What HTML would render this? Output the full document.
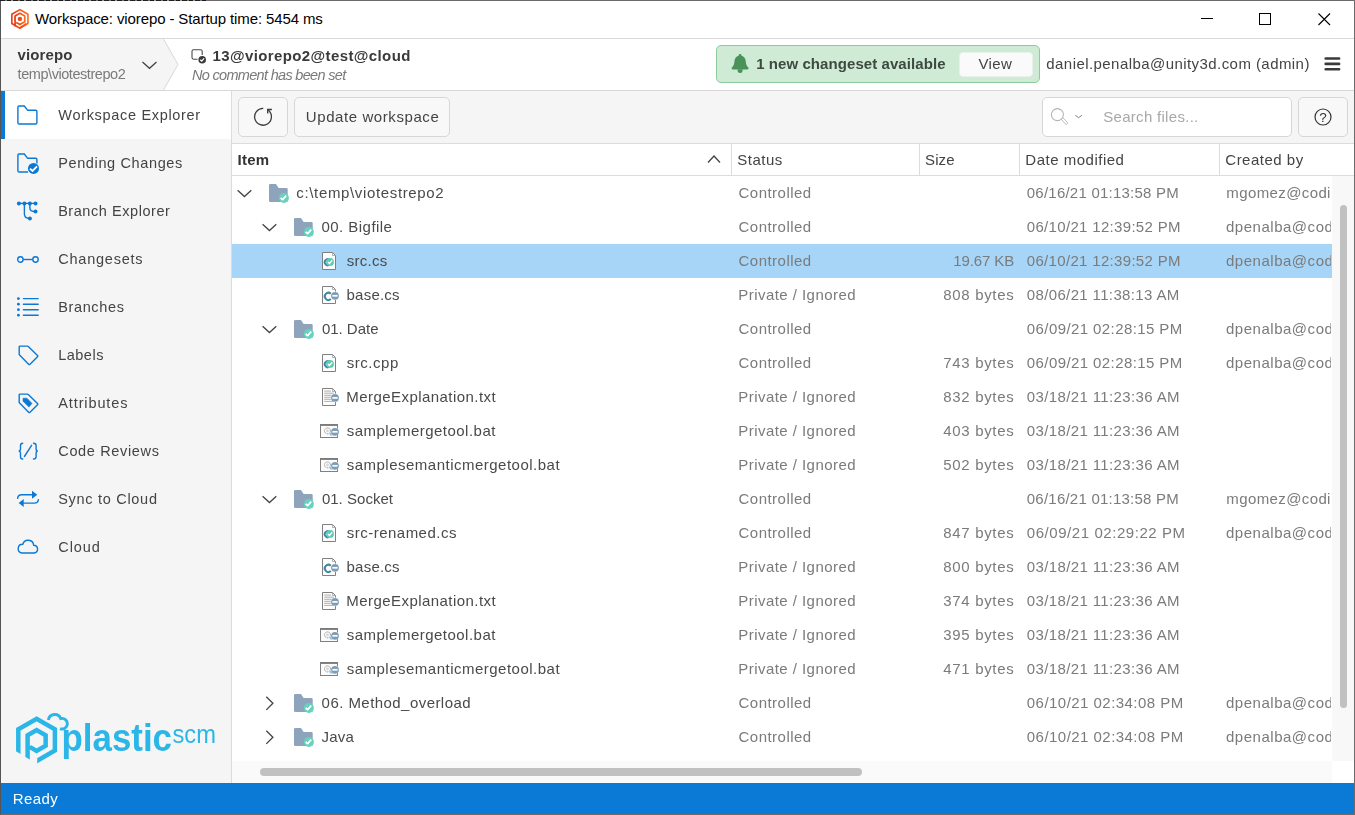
<!DOCTYPE html>
<html lang="en"><head><meta charset="utf-8"><title>Workspace: viorepo</title>
<style>
html,body{margin:0;padding:0;}
body{width:1355px;height:815px;overflow:hidden;background:#fff;font-family:"Liberation Sans",sans-serif;position:relative;}
.a{position:absolute;}
.t{position:absolute;white-space:nowrap;line-height:20px;height:20px;}
.btn{position:absolute;box-sizing:border-box;border:1px solid #d6d6d6;border-radius:5px;background:#f8f8f8;}
svg{position:absolute;overflow:visible;}
</style></head><body>
<div class="a" style="left:0px;top:0px;width:1355px;height:815px;background:#fff;"></div>
<div class="a" style="left:1px;top:38px;width:1353px;height:1px;background:#d9d9d9;"></div>
<svg style="left:1px;top:39px" width="200" height="51" viewBox="0 0 200 51"><path d="M0 0H162.5L177 25.5L162.5 51H0Z" fill="#f5f5f5"/><path d="M162.5 0L177 25.5L162.5 51" fill="none" stroke="#d8d8d8" stroke-width="1"/></svg>
<div class="a" style="left:1px;top:90px;width:1353px;height:1px;background:#d9d9d9;"></div>
<div class="a" style="left:1px;top:91px;width:230px;height:692px;background:#f5f5f5;"></div>
<div class="a" style="left:231px;top:91px;width:1px;height:692px;background:#dcdcdc;"></div>
<div class="a" style="left:1px;top:91px;width:230px;height:48px;background:#fff;"></div>
<div class="a" style="left:1px;top:91px;width:4px;height:48px;background:#0b78d4;"></div>
<div class="a" style="left:232px;top:91px;width:1122px;height:52px;background:#f5f5f5;"></div>
<div class="a" style="left:232px;top:143px;width:1122px;height:1px;background:#dcdcdc;"></div>
<div class="a" style="left:232px;top:175px;width:1122px;height:1px;background:#dcdcdc;"></div>
<div class="a" style="left:731px;top:144px;width:1px;height:31px;background:#dcdcdc;"></div>
<div class="a" style="left:919px;top:144px;width:1px;height:31px;background:#dcdcdc;"></div>
<div class="a" style="left:1019px;top:144px;width:1px;height:31px;background:#dcdcdc;"></div>
<div class="a" style="left:1219px;top:144px;width:1px;height:31px;background:#dcdcdc;"></div>
<div class="a" style="left:232px;top:244px;width:1100px;height:34px;background:#a6d5f7;"></div>
<div class="a" style="left:1332px;top:176px;width:22px;height:585px;background:#f8f8f8;"></div>
<div class="a" style="left:1339.5px;top:204.5px;width:7.5px;height:503.5px;background:#c1c1c1;border-radius:4px;"></div>
<div class="a" style="left:232px;top:761px;width:1100px;height:22px;background:#fafafa;"></div>
<div class="a" style="left:260px;top:768px;width:602px;height:7.5px;background:#c1c1c1;border-radius:4px;"></div>
<div class="a" style="left:1px;top:783px;width:1353px;height:31px;background:#0b7ad6;"></div>
<div class="a" style="left:0;top:0;width:206px;height:1px;background:repeating-linear-gradient(90deg,#222 0 5px,#777 5px 7px,#1a1a1a 7px 11px,#999 11px 13px);z-index:5;"></div>
<svg style="left:0px;top:0px" width="40" height="38" viewBox="0 0 40 38"><defs><linearGradient id="tg" x1="0" x2="1" y1="0" y2="0"><stop offset="0" stop-color="#e63a10"/><stop offset="1" stop-color="#ff6a1c"/></linearGradient></defs><path d="M19.90 9.60 L27.95 14.25 L27.95 23.55 L19.90 28.20 L11.85 23.55 L11.85 14.25Z" fill="none" stroke="url(#tg)" stroke-width="1.600" stroke-linejoin="round"/><path d="M15.05 26.50L15.05 16.10L19.90 13.30L24.75 16.10L24.75 21.70L19.90 24.50L16.25 22.40" fill="none" stroke="url(#tg)" stroke-width="1.700"/><path d="M19.90 27.70L26.35 23.35" stroke="url(#tg)" stroke-width="1.300"/><circle cx="19.9" cy="18.9" r="2.200" fill="#ee4a12"/></svg>
<span class="t" style="left:35.10px;top:9px;font-size:15px;color:#000;letter-spacing:-0.112px;">Workspace: viorepo - Startup time: 5454 ms</span>
<svg style="left:1190px;top:0px" width="165" height="38" viewBox="0 0 165 38"><path d="M11 18.500H23" stroke="#000" stroke-width="1"/><rect x="69.500" y="13.500" width="11" height="11" fill="none" stroke="#000" stroke-width="1"/><path d="M128.500 13.500L140 25M140 13.500L128.500 25" stroke="#000" stroke-width="1.1" fill="none"/></svg>
<div class="a" style="left:0;top:0;width:1355px;height:815px;will-change:transform;">
<span class="t" style="left:17.60px;top:45px;font-size:15px;color:#3a3a3a;font-weight:700;letter-spacing:0.117px;">viorepo</span>
<span class="t" style="left:17.60px;top:64px;font-size:14.5px;color:#7a7a7a;letter-spacing:-0.444px;">temp\viotestrepo2</span>
<svg style="left:141px;top:59.500px" width="18" height="12" viewBox="0 0 18 12"><path d="M1.500 2L8.500 8.300L15.500 2" fill="none" stroke="#444" stroke-width="1.300"/></svg>
<svg style="left:190px;top:47.800px" width="18" height="18" viewBox="0 0 18 18"><path d="M12.200 7V3.300Q12.200 1.700 10.600 1.700H3.600Q2 1.700 2 3.300V9.600Q2 11.200 3.600 11.200H7.500" fill="none" stroke="#4a4a4a" stroke-width="1.100"/><circle cx="12.200" cy="11.700" r="3.800" fill="#3a3a3a"/><path d="M10.300 11.800L11.700 13.100L14.100 10.400" fill="none" stroke="#fff" stroke-width="1.200"/></svg>
<span class="t" style="left:212.45px;top:45.8px;font-size:15px;color:#3a3a3a;font-weight:700;letter-spacing:0.388px;">13@viorepo2@test@cloud</span>
<span class="t" style="left:192.00px;top:64.9px;font-size:14.5px;color:#7a7a7a;font-style:italic;letter-spacing:-0.686px;">No comment has been set</span>
<div class="a" style="left:716px;top:45px;width:324px;height:38px;box-sizing:border-box;background:#cfebd6;border:1px solid #8ccb9b;border-radius:5px;"></div>
<svg style="left:730.500px;top:53px" width="19" height="22" viewBox="0 0 19 22"><path d="M9.100 1C10 1 10.400 1.600 10.400 2.400C13.200 3.200 14.600 5.600 14.800 8.500C15 11.500 15.600 12.800 17.300 14.600C17.900 15.300 17.500 16.400 16.600 16.400H1.600C0.700 16.400 0.300 15.300 0.900 14.600C2.600 12.800 3.200 11.500 3.400 8.500C3.600 5.600 5 3.200 7.800 2.400C7.800 1.600 8.200 1 9.100 1Z" fill="#4a9259"/><path d="M6.600 16.200H11.600V17.400A2.500 2.500 0 0 1 6.600 17.400Z" fill="#4a9259"/></svg>
<span class="t" style="left:756.15px;top:54px;font-size:15px;color:#3d4a40;font-weight:700;letter-spacing:0.073px;">1 new changeset available</span>
<div class="a" style="left:958.500px;top:51.500px;width:74px;height:25px;box-sizing:border-box;background:#fafafa;border:1px solid #eaf1ec;border-radius:4px;"></div>
<span class="t" style="left:978.50px;top:54px;font-size:15px;color:#444;letter-spacing:0.367px;">View</span>
<span class="t" style="left:1046.30px;top:54px;font-size:15px;color:#444;letter-spacing:0.436px;">daniel.penalba@unity3d.com (admin)</span>
<svg style="left:1322px;top:55px" width="20" height="18" viewBox="0 0 20 18"><path d="M3.700 3.500H17.100M3.700 8.900H17.100M3.700 14.300H17.100" stroke="#3a3a3a" stroke-width="2.600" stroke-linecap="round"/></svg>
<svg style="left:16px;top:103px" width="24" height="24" viewBox="0 0 24 24"><path d="M1.900 4.200Q1.900 3 3.100 3H8.300L11.500 7.200H19.700Q20.900 7.200 20.900 8.400V19.800Q20.900 21 19.700 21H3.100Q1.900 21 1.900 19.800Z" fill="none" stroke="#0b78d4" stroke-width="1.400" stroke-linejoin="round"/></svg>
<span class="t" style="left:58.30px;top:105px;font-size:14.5px;color:#444;letter-spacing:0.682px;">Workspace Explorer</span>
<svg style="left:16px;top:151px" width="24" height="24" viewBox="0 0 24 24"><path d="M12 21H3.100Q1.900 21 1.900 19.800V4.200Q1.900 3 3.100 3H8.300L11.500 7.200H19.700Q20.900 7.200 20.900 8.400V12.500" fill="none" stroke="#0b78d4" stroke-width="1.400" stroke-linejoin="round"/><circle cx="17.500" cy="17.400" r="5.500" fill="#0b78d4"/><path d="M14 17.600L16.500 20L21 15.300" fill="none" stroke="#fff" stroke-width="1.900"/></svg>
<span class="t" style="left:58.15px;top:153px;font-size:14.5px;color:#444;letter-spacing:0.632px;">Pending Changes</span>
<svg style="left:16px;top:199px" width="24" height="24" viewBox="0 0 24 24"><path d="M2.900 4.400H19.500M8.400 4.400V15Q8.400 19.500 13.900 19.500M13.900 4.400V9Q13.900 12.600 19.500 12.600" fill="none" stroke="#0b78d4" stroke-width="1.400"/><circle cx="2.900" cy="4.400" r="2" fill="#0b78d4"/><circle cx="8.400" cy="4.400" r="2" fill="#0b78d4"/><circle cx="13.900" cy="4.400" r="2" fill="#0b78d4"/><circle cx="19.500" cy="4.400" r="2" fill="#0b78d4"/><circle cx="19.500" cy="12.600" r="2" fill="#0b78d4"/><circle cx="13.900" cy="19.500" r="2" fill="#0b78d4"/></svg>
<span class="t" style="left:58.15px;top:201px;font-size:14.5px;color:#444;letter-spacing:0.554px;">Branch Explorer</span>
<svg style="left:16px;top:247px" width="24" height="24" viewBox="0 0 24 24"><path d="M7.100 12.500H16.800" stroke="#0b78d4" stroke-width="1.400"/><circle cx="4.400" cy="12.500" r="2.700" fill="none" stroke="#0b78d4" stroke-width="1.400"/><circle cx="19.500" cy="12.500" r="2.700" fill="none" stroke="#0b78d4" stroke-width="1.400"/></svg>
<span class="t" style="left:58.30px;top:249px;font-size:14.5px;color:#444;letter-spacing:0.767px;">Changesets</span>
<svg style="left:16px;top:295px" width="24" height="24" viewBox="0 0 24 24"><path d="M7.400 3.600H22.200M7.400 9.200H22.200M7.400 14.700H22.200M7.400 20.200H22.200" stroke="#0b78d4" stroke-width="1.400" stroke-linecap="round"/><circle cx="2.400" cy="3.600" r="1.400" fill="#0b78d4"/><circle cx="2.400" cy="9.200" r="1.400" fill="#0b78d4"/><circle cx="2.400" cy="14.700" r="1.400" fill="#0b78d4"/><circle cx="2.400" cy="20.200" r="1.400" fill="#0b78d4"/></svg>
<span class="t" style="left:58.15px;top:297px;font-size:14.5px;color:#444;letter-spacing:0.650px;">Branches</span>
<svg style="left:16px;top:343px" width="24" height="24" viewBox="0 0 24 24"><path d="M4.200 3.100H11.400Q11.900 3.100 12.300 3.500L21.500 12.400Q22.200 13.100 21.500 13.800L14 21.300Q13.300 22 12.600 21.300L3.600 12.100Q3.200 11.700 3.200 11.200V4.100Q3.200 3.100 4.200 3.100Z" fill="none" stroke="#0b78d4" stroke-width="1.400" stroke-linejoin="round"/></svg>
<span class="t" style="left:58.15px;top:345px;font-size:14.5px;color:#444;letter-spacing:0.510px;">Labels</span>
<svg style="left:16px;top:391px" width="24" height="24" viewBox="0 0 24 24"><path d="M4.200 3.100H11.400Q11.900 3.100 12.300 3.500L21.500 12.400Q22.200 13.100 21.500 13.800L14 21.300Q13.300 22 12.600 21.300L3.600 12.100Q3.200 11.700 3.200 11.200V4.100Q3.200 3.100 4.200 3.100Z" fill="none" stroke="#0b78d4" stroke-width="1.400" stroke-linejoin="round"/><path d="M7 7.200H10.900L16 12.400L12.900 16.100L7 10.200Z" fill="#0b78d4" stroke="#0b78d4" stroke-width="0.600" stroke-linejoin="round"/></svg>
<span class="t" style="left:58.30px;top:393px;font-size:14.5px;color:#444;letter-spacing:0.878px;">Attributes</span>
<svg style="left:16px;top:439px" width="24" height="24" viewBox="0 0 24 24"><path d="M6.700 4.300Q4.500 4.300 4.500 6.500V10Q4.500 12.100 2.600 12.100Q4.500 12.100 4.500 14.200V17.800Q4.500 20 6.700 20M17.500 4.300Q20.100 4.300 20.100 6.500V10Q20.100 12.100 21.900 12.100Q20.100 12.100 20.100 14.200V17.800Q20.100 20 17.500 20M15.600 6.300L8.400 17.500" fill="none" stroke="#0b78d4" stroke-width="1.400" stroke-linecap="round"/></svg>
<span class="t" style="left:58.30px;top:441px;font-size:14.5px;color:#444;letter-spacing:0.645px;">Code Reviews</span>
<svg style="left:16px;top:487px" width="24" height="24" viewBox="0 0 24 24"><path d="M1.600 11.400Q2 7.700 5.700 7.700H16.500M22.400 12.600Q22 16.100 18.500 16.100H7.500" fill="none" stroke="#0b78d4" stroke-width="1.400" stroke-linecap="round"/><path d="M16 3.800L21.300 7.700L16 11.700Z M7.700 12.100L2.700 16.100L7.700 20Z" fill="#0b78d4"/></svg>
<span class="t" style="left:58.15px;top:489px;font-size:14.5px;color:#444;letter-spacing:0.712px;">Sync to Cloud</span>
<svg style="left:16px;top:535px" width="24" height="24" viewBox="0 0 24 24"><path d="M5.700 18H18.500A3.950 3.950 0 0 0 17.600 10.200A5.500 5.500 0 0 0 6.800 9.300A4.400 4.400 0 0 0 5.700 18Z" fill="none" stroke="#0b78d4" stroke-width="1.400" stroke-linejoin="round"/></svg>
<span class="t" style="left:58.30px;top:537px;font-size:14.5px;color:#444;letter-spacing:0.900px;">Cloud</span>
<svg style="left:0px;top:700px" width="232" height="80" viewBox="0 0 232 80"><path d="M18.300 58V29.400L36.600 18.850L54.900 29.400V50.550L33 63.200" fill="none" stroke="#2bb6e8" stroke-width="4.500" stroke-linejoin="miter"/><path d="M27.600 63V35.200L36.600 30L45.650 35.200V45.650L36.600 50.900L29.700 46.900" fill="none" stroke="#2bb6e8" stroke-width="4.500" stroke-linejoin="miter"/><path d="M15 50.650L22 54.700V66H15Z M24 56.200L31.500 60.500V66H24Z M31.500 54H37.200V68H31.500Z" fill="#f5f5f5"/><path d="M48.400 20A6.400 6.400 0 0 1 60.700 18.600A5.300 5.300 0 1 1 60 28.600" fill="none" stroke="#2bb6e8" stroke-width="2.900"/><text x="61.500" y="50.700" font-family="Liberation Sans, sans-serif" font-weight="700" font-size="38" fill="#2bb6e8" textLength="110.500" lengthAdjust="spacingAndGlyphs">plastic</text><text x="172.500" y="43" font-family="Liberation Sans, sans-serif" font-size="25.500" fill="#2bb6e8" textLength="43.500" lengthAdjust="spacingAndGlyphs">scm</text></svg>
<span class="t" style="left:12.85px;top:789px;font-size:15px;color:#fff;letter-spacing:0.388px;">Ready</span>
<div class="btn" style="left:238px;top:97px;width:50px;height:40px;"></div>
<svg style="left:252px;top:105px" width="22" height="24" viewBox="0 0 22 24"><path d="M11.300 3.400A8.400 8.400 0 1 0 16.100 5.100" fill="none" stroke="#3c3c3c" stroke-width="1.300"/><path d="M19.900 4.500H15.700V8.600" fill="none" stroke="#3c3c3c" stroke-width="1.300"/></svg>
<div class="btn" style="left:294px;top:97px;width:156px;height:40px;"></div>
<span class="t" style="left:305.85px;top:107px;font-size:15px;color:#444;letter-spacing:0.577px;">Update workspace</span>
<div class="btn" style="left:1042px;top:97px;width:250px;height:40px;background:#fff;"></div>
<svg style="left:1040px;top:95px" width="50" height="40" viewBox="0 0 50 40"><circle cx="17.400" cy="19.600" r="6" fill="none" stroke="#b4b4b4" stroke-width="1.100"/><path d="M21.300 24.300L22.900 22.700L27.300 27.300Q28 28.600 26.900 29.200Q26 29.600 25.300 28.800Z" fill="#fff" stroke="#b4b4b4" stroke-width="0.900"/><path d="M35.300 20.300L38.600 22.700L41.900 20.300" fill="none" stroke="#707070" stroke-width="0.900"/></svg>
<span class="t" style="left:1103.25px;top:107px;font-size:15px;color:#a8a8a8;letter-spacing:0.296px;">Search files...</span>
<div class="btn" style="left:1298px;top:97px;width:50px;height:40px;"></div>
<svg style="left:1312px;top:106px" width="22" height="22" viewBox="0 0 22 22"><circle cx="11" cy="11" r="8" fill="none" stroke="#333" stroke-width="1.200"/><text x="11" y="15.500" text-anchor="middle" font-family="Liberation Sans, sans-serif" font-size="13.500" fill="#333">?</text></svg>
<span class="t" style="left:237.55px;top:150px;font-size:15px;color:#333;font-weight:700;letter-spacing:0.250px;">Item</span>
<svg style="left:706.200px;top:152.600px" width="16" height="12" viewBox="0 0 16 12"><path d="M2 9.500L8 3L14 9.500" fill="none" stroke="#444" stroke-width="1.300"/></svg>
<span class="t" style="left:737.35px;top:150px;font-size:15px;color:#444;letter-spacing:0.470px;">Status</span>
<span class="t" style="left:925.05px;top:150px;font-size:15px;color:#444;letter-spacing:0.083px;">Size</span>
<span class="t" style="left:1025.35px;top:150px;font-size:15px;color:#444;letter-spacing:0.504px;">Date modified</span>
<span class="t" style="left:1225.30px;top:150px;font-size:15px;color:#444;letter-spacing:0.500px;">Created by</span>
<div class="a" style="left:232px;top:176px;width:1100px;height:584px;overflow:hidden;">
<svg style="left:4px;top:7px" width="20" height="20" viewBox="0 0 20 20"><path d="M1.600 7.300L8.450 13.600L15.300 7.300" fill="none" stroke="#444" stroke-width="1.300"/></svg>
<svg style="left:36px;top:7px" width="24" height="22" viewBox="0 0 24 22"><path d="M1 2.200Q1 1 2.200 1H8L10.600 5H18.500Q19.700 5 19.700 6.200V17.700Q19.700 18.900 18.500 18.900H2.200Q1 18.900 1 17.700Z" fill="#8ea4bc"/><circle cx="15.900" cy="15" r="5" fill="#67d3bd"/><path d="M12.600 15L14.700 16.600L18.200 12.600" fill="none" stroke="#fff" stroke-width="1.700"/></svg>
<span class="t" style="left:64.30px;top:7px;font-size:15px;color:#4a4a4a;letter-spacing:0.647px;">c:\temp\viotestrepo2</span>
<span class="t" style="left:506.50px;top:7px;font-size:15px;color:#7b7b7b;letter-spacing:0.478px;">Controlled</span>
<span class="t" style="left:794.80px;top:7px;font-size:15px;color:#7b7b7b;letter-spacing:0.226px;">06/16/21 01:13:58 PM</span>
<div class="a" style="left:988px;top:7px;width:111px;height:20px;overflow:hidden;">
<span class="t" style="left:6.35px;top:0px;font-size:15px;color:#7b7b7b;letter-spacing:0.385px;">mgomez@codicesoftware.com</span>
</div>
<svg style="left:29px;top:41px" width="20" height="20" viewBox="0 0 20 20"><path d="M1.600 7.300L8.450 13.600L15.300 7.300" fill="none" stroke="#444" stroke-width="1.300"/></svg>
<svg style="left:61px;top:41px" width="24" height="22" viewBox="0 0 24 22"><path d="M1 2.200Q1 1 2.200 1H8L10.600 5H18.500Q19.700 5 19.700 6.200V17.700Q19.700 18.900 18.500 18.900H2.200Q1 18.900 1 17.700Z" fill="#8ea4bc"/><circle cx="15.900" cy="15" r="5" fill="#67d3bd"/><path d="M12.600 15L14.700 16.600L18.200 12.600" fill="none" stroke="#fff" stroke-width="1.700"/></svg>
<span class="t" style="left:89.40px;top:41px;font-size:15px;color:#4a4a4a;letter-spacing:0.470px;">00. Bigfile</span>
<span class="t" style="left:506.50px;top:41px;font-size:15px;color:#7b7b7b;letter-spacing:0.478px;">Controlled</span>
<span class="t" style="left:794.80px;top:41px;font-size:15px;color:#7b7b7b;letter-spacing:0.321px;">06/10/21 12:39:52 PM</span>
<div class="a" style="left:988px;top:41px;width:111px;height:20px;overflow:hidden;">
<span class="t" style="left:6.00px;top:0px;font-size:15px;color:#7b7b7b;letter-spacing:0.518px;">dpenalba@codicesoftware.com</span>
</div>
<svg style="left:88px;top:75px" width="22" height="20" viewBox="0 0 22 20"><path d="M2.500 1.500H12.500L15.500 4.500V18.500H2.500Z" fill="#fdfdfd" stroke="#808080" stroke-width="1"/><path d="M12.500 1.800V4.500H15.200" fill="none" stroke="#a8a8a8" stroke-width="0.900"/><path d="M9.500 8.600A3.100 3.100 0 1 0 9.500 13.800" fill="none" stroke="#3f86a6" stroke-width="1.900"/><circle cx="10" cy="10.900" r="3.900" fill="#5ccbb2"/><path d="M7.900 11L9.500 12.400L12.200 9.300" fill="none" stroke="#fff" stroke-width="1.400"/></svg>
<span class="t" style="left:114.70px;top:75px;font-size:15px;color:#4a4a4a;letter-spacing:0.280px;">src.cs</span>
<span class="t" style="left:506.50px;top:75px;font-size:15px;color:#7b7b7b;letter-spacing:0.478px;">Controlled</span>
<span class="t" style="left:721.15px;top:75px;font-size:15px;color:#7b7b7b;letter-spacing:-0.079px;">19.67 KB</span>
<span class="t" style="left:794.80px;top:75px;font-size:15px;color:#7b7b7b;letter-spacing:0.321px;">06/10/21 12:39:52 PM</span>
<div class="a" style="left:988px;top:75px;width:111px;height:20px;overflow:hidden;">
<span class="t" style="left:6.00px;top:0px;font-size:15px;color:#7b7b7b;letter-spacing:0.518px;">dpenalba@codicesoftware.com</span>
</div>
<svg style="left:88px;top:109px" width="22" height="20" viewBox="0 0 22 20"><path d="M2.500 1.500H12.500L15.500 4.500V18.500H2.500Z" fill="#fdfdfd" stroke="#808080" stroke-width="1"/><path d="M12.500 1.800V4.500H15.200" fill="none" stroke="#a8a8a8" stroke-width="0.900"/><path d="M10.800 8.700A3.600 3.600 0 1 0 10.800 14.100" fill="none" stroke="#3f86a6" stroke-width="2"/><circle cx="15" cy="10.8" r="4.300" fill="#fff"/><circle cx="15" cy="10.8" r="3.900" fill="#7f9db5"/><path d="M12.4 10.8H17.6" stroke="#fff" stroke-width="1.700"/></svg>
<span class="t" style="left:114.55px;top:109px;font-size:15px;color:#4a4a4a;letter-spacing:0.225px;">base.cs</span>
<span class="t" style="left:506.35px;top:109px;font-size:15px;color:#7b7b7b;letter-spacing:0.447px;">Private / Ignored</span>
<span class="t" style="left:711.30px;top:109px;font-size:15px;color:#7b7b7b;letter-spacing:0.663px;">808 bytes</span>
<span class="t" style="left:794.80px;top:109px;font-size:15px;color:#7b7b7b;letter-spacing:0.358px;">08/06/21 11:38:13 AM</span>
<svg style="left:29px;top:143px" width="20" height="20" viewBox="0 0 20 20"><path d="M1.600 7.300L8.450 13.600L15.300 7.300" fill="none" stroke="#444" stroke-width="1.300"/></svg>
<svg style="left:61px;top:143px" width="24" height="22" viewBox="0 0 24 22"><path d="M1 2.200Q1 1 2.200 1H8L10.600 5H18.500Q19.700 5 19.700 6.200V17.700Q19.700 18.900 18.500 18.900H2.200Q1 18.900 1 17.700Z" fill="#8ea4bc"/><circle cx="15.900" cy="15" r="5" fill="#67d3bd"/><path d="M12.600 15L14.700 16.600L18.200 12.600" fill="none" stroke="#fff" stroke-width="1.700"/></svg>
<span class="t" style="left:89.90px;top:143px;font-size:15px;color:#4a4a4a;letter-spacing:-0.014px;">01. Date</span>
<span class="t" style="left:506.50px;top:143px;font-size:15px;color:#7b7b7b;letter-spacing:0.478px;">Controlled</span>
<span class="t" style="left:794.80px;top:143px;font-size:15px;color:#7b7b7b;letter-spacing:0.411px;">06/09/21 02:28:15 PM</span>
<div class="a" style="left:988px;top:143px;width:111px;height:20px;overflow:hidden;">
<span class="t" style="left:6.00px;top:0px;font-size:15px;color:#7b7b7b;letter-spacing:0.518px;">dpenalba@codicesoftware.com</span>
</div>
<svg style="left:88px;top:177px" width="22" height="20" viewBox="0 0 22 20"><path d="M2.500 1.500H12.500L15.500 4.500V18.500H2.500Z" fill="#fdfdfd" stroke="#808080" stroke-width="1"/><path d="M12.500 1.800V4.500H15.200" fill="none" stroke="#a8a8a8" stroke-width="0.900"/><path d="M9.500 8.600A3.100 3.100 0 1 0 9.500 13.800" fill="none" stroke="#3f86a6" stroke-width="1.900"/><circle cx="10" cy="10.900" r="3.900" fill="#5ccbb2"/><path d="M7.900 11L9.500 12.400L12.200 9.300" fill="none" stroke="#fff" stroke-width="1.400"/></svg>
<span class="t" style="left:114.70px;top:177px;font-size:15px;color:#4a4a4a;letter-spacing:0.533px;">src.cpp</span>
<span class="t" style="left:506.50px;top:177px;font-size:15px;color:#7b7b7b;letter-spacing:0.478px;">Controlled</span>
<span class="t" style="left:711.30px;top:177px;font-size:15px;color:#7b7b7b;letter-spacing:0.663px;">743 bytes</span>
<span class="t" style="left:794.80px;top:177px;font-size:15px;color:#7b7b7b;letter-spacing:0.411px;">06/09/21 02:28:15 PM</span>
<div class="a" style="left:988px;top:177px;width:111px;height:20px;overflow:hidden;">
<span class="t" style="left:6.00px;top:0px;font-size:15px;color:#7b7b7b;letter-spacing:0.518px;">dpenalba@codicesoftware.com</span>
</div>
<svg style="left:88px;top:211px" width="22" height="20" viewBox="0 0 22 20"><path d="M2.500 1.500H12.500L15.500 4.500V18.500H2.500Z" fill="#fdfdfd" stroke="#808080" stroke-width="1"/><path d="M12.500 1.800V4.500H15.200" fill="none" stroke="#a8a8a8" stroke-width="0.900"/><path d="M4.200 4.100H11M4.200 6.200H14M4.200 8.300H14M4.200 10.300H14M4.200 12.300H14M4.200 14.400H14" stroke="#9a9a9a" stroke-width="0.800"/><circle cx="15" cy="10.9" r="4.300" fill="#fff"/><circle cx="15" cy="10.9" r="3.900" fill="#7f9db5"/><path d="M12.4 10.9H17.6" stroke="#fff" stroke-width="1.700"/></svg>
<span class="t" style="left:114.20px;top:211px;font-size:15px;color:#4a4a4a;letter-spacing:0.453px;">MergeExplanation.txt</span>
<span class="t" style="left:506.35px;top:211px;font-size:15px;color:#7b7b7b;letter-spacing:0.447px;">Private / Ignored</span>
<span class="t" style="left:711.30px;top:211px;font-size:15px;color:#7b7b7b;letter-spacing:0.663px;">832 bytes</span>
<span class="t" style="left:794.80px;top:211px;font-size:15px;color:#7b7b7b;letter-spacing:0.374px;">03/18/21 11:23:36 AM</span>
<svg style="left:88px;top:245px" width="22" height="20" viewBox="0 0 22 20"><rect x="0.500" y="3.500" width="17" height="13" fill="#fcfcfc" stroke="#808080" stroke-width="1"/><path d="M0.500 4.200H17.500" stroke="#777" stroke-width="1.400"/><circle cx="7.500" cy="9.900" r="3" fill="none" stroke="#8a8a8a" stroke-width="1" stroke-dasharray="1.300 0.800"/><circle cx="7.500" cy="9.900" r="0.900" fill="none" stroke="#aaa" stroke-width="0.600"/><circle cx="11.300" cy="13" r="1.800" fill="#8fc4ea"/><circle cx="15" cy="10.8" r="4.300" fill="#fff"/><circle cx="15" cy="10.8" r="3.900" fill="#7f9db5"/><path d="M12.4 10.8H17.6" stroke="#fff" stroke-width="1.700"/></svg>
<span class="t" style="left:114.70px;top:245px;font-size:15px;color:#4a4a4a;letter-spacing:0.478px;">samplemergetool.bat</span>
<span class="t" style="left:506.35px;top:245px;font-size:15px;color:#7b7b7b;letter-spacing:0.447px;">Private / Ignored</span>
<span class="t" style="left:711.30px;top:245px;font-size:15px;color:#7b7b7b;letter-spacing:0.663px;">403 bytes</span>
<span class="t" style="left:794.80px;top:245px;font-size:15px;color:#7b7b7b;letter-spacing:0.374px;">03/18/21 11:23:36 AM</span>
<svg style="left:88px;top:279px" width="22" height="20" viewBox="0 0 22 20"><rect x="0.500" y="3.500" width="17" height="13" fill="#fcfcfc" stroke="#808080" stroke-width="1"/><path d="M0.500 4.200H17.500" stroke="#777" stroke-width="1.400"/><circle cx="7.500" cy="9.900" r="3" fill="none" stroke="#8a8a8a" stroke-width="1" stroke-dasharray="1.300 0.800"/><circle cx="7.500" cy="9.900" r="0.900" fill="none" stroke="#aaa" stroke-width="0.600"/><circle cx="11.300" cy="13" r="1.800" fill="#8fc4ea"/><circle cx="15" cy="10.8" r="4.300" fill="#fff"/><circle cx="15" cy="10.8" r="3.900" fill="#7f9db5"/><path d="M12.4 10.8H17.6" stroke="#fff" stroke-width="1.700"/></svg>
<span class="t" style="left:114.70px;top:279px;font-size:15px;color:#4a4a4a;letter-spacing:0.492px;">samplesemanticmergetool.bat</span>
<span class="t" style="left:506.35px;top:279px;font-size:15px;color:#7b7b7b;letter-spacing:0.447px;">Private / Ignored</span>
<span class="t" style="left:711.30px;top:279px;font-size:15px;color:#7b7b7b;letter-spacing:0.663px;">502 bytes</span>
<span class="t" style="left:794.80px;top:279px;font-size:15px;color:#7b7b7b;letter-spacing:0.374px;">03/18/21 11:23:36 AM</span>
<svg style="left:29px;top:313px" width="20" height="20" viewBox="0 0 20 20"><path d="M1.600 7.300L8.450 13.600L15.300 7.300" fill="none" stroke="#444" stroke-width="1.300"/></svg>
<svg style="left:61px;top:313px" width="24" height="22" viewBox="0 0 24 22"><path d="M1 2.200Q1 1 2.200 1H8L10.600 5H18.500Q19.700 5 19.700 6.200V17.700Q19.700 18.900 18.500 18.900H2.200Q1 18.900 1 17.700Z" fill="#8ea4bc"/><circle cx="15.900" cy="15" r="5" fill="#67d3bd"/><path d="M12.600 15L14.700 16.600L18.200 12.600" fill="none" stroke="#fff" stroke-width="1.700"/></svg>
<span class="t" style="left:89.90px;top:313px;font-size:15px;color:#4a4a4a;letter-spacing:0.022px;">01. Socket</span>
<span class="t" style="left:506.50px;top:313px;font-size:15px;color:#7b7b7b;letter-spacing:0.478px;">Controlled</span>
<span class="t" style="left:794.80px;top:313px;font-size:15px;color:#7b7b7b;letter-spacing:0.226px;">06/16/21 01:13:58 PM</span>
<div class="a" style="left:988px;top:313px;width:111px;height:20px;overflow:hidden;">
<span class="t" style="left:6.35px;top:0px;font-size:15px;color:#7b7b7b;letter-spacing:0.385px;">mgomez@codicesoftware.com</span>
</div>
<svg style="left:88px;top:347px" width="22" height="20" viewBox="0 0 22 20"><path d="M2.500 1.500H12.500L15.500 4.500V18.500H2.500Z" fill="#fdfdfd" stroke="#808080" stroke-width="1"/><path d="M12.500 1.800V4.500H15.200" fill="none" stroke="#a8a8a8" stroke-width="0.900"/><path d="M9.500 8.600A3.100 3.100 0 1 0 9.500 13.800" fill="none" stroke="#3f86a6" stroke-width="1.900"/><circle cx="10" cy="10.900" r="3.900" fill="#5ccbb2"/><path d="M7.900 11L9.500 12.400L12.200 9.300" fill="none" stroke="#fff" stroke-width="1.400"/></svg>
<span class="t" style="left:114.70px;top:347px;font-size:15px;color:#4a4a4a;letter-spacing:0.492px;">src-renamed.cs</span>
<span class="t" style="left:506.50px;top:347px;font-size:15px;color:#7b7b7b;letter-spacing:0.478px;">Controlled</span>
<span class="t" style="left:711.30px;top:347px;font-size:15px;color:#7b7b7b;letter-spacing:0.663px;">847 bytes</span>
<span class="t" style="left:794.80px;top:347px;font-size:15px;color:#7b7b7b;letter-spacing:0.558px;">06/09/21 02:29:22 PM</span>
<div class="a" style="left:988px;top:347px;width:111px;height:20px;overflow:hidden;">
<span class="t" style="left:6.00px;top:0px;font-size:15px;color:#7b7b7b;letter-spacing:0.518px;">dpenalba@codicesoftware.com</span>
</div>
<svg style="left:88px;top:381px" width="22" height="20" viewBox="0 0 22 20"><path d="M2.500 1.500H12.500L15.500 4.500V18.500H2.500Z" fill="#fdfdfd" stroke="#808080" stroke-width="1"/><path d="M12.500 1.800V4.500H15.200" fill="none" stroke="#a8a8a8" stroke-width="0.900"/><path d="M10.800 8.700A3.600 3.600 0 1 0 10.800 14.100" fill="none" stroke="#3f86a6" stroke-width="2"/><circle cx="15" cy="10.8" r="4.300" fill="#fff"/><circle cx="15" cy="10.8" r="3.900" fill="#7f9db5"/><path d="M12.4 10.8H17.6" stroke="#fff" stroke-width="1.700"/></svg>
<span class="t" style="left:114.55px;top:381px;font-size:15px;color:#4a4a4a;letter-spacing:0.225px;">base.cs</span>
<span class="t" style="left:506.35px;top:381px;font-size:15px;color:#7b7b7b;letter-spacing:0.447px;">Private / Ignored</span>
<span class="t" style="left:711.30px;top:381px;font-size:15px;color:#7b7b7b;letter-spacing:0.663px;">800 bytes</span>
<span class="t" style="left:794.80px;top:381px;font-size:15px;color:#7b7b7b;letter-spacing:0.374px;">03/18/21 11:23:36 AM</span>
<svg style="left:88px;top:415px" width="22" height="20" viewBox="0 0 22 20"><path d="M2.500 1.500H12.500L15.500 4.500V18.500H2.500Z" fill="#fdfdfd" stroke="#808080" stroke-width="1"/><path d="M12.500 1.800V4.500H15.200" fill="none" stroke="#a8a8a8" stroke-width="0.900"/><path d="M4.200 4.100H11M4.200 6.200H14M4.200 8.300H14M4.200 10.300H14M4.200 12.300H14M4.200 14.400H14" stroke="#9a9a9a" stroke-width="0.800"/><circle cx="15" cy="10.9" r="4.300" fill="#fff"/><circle cx="15" cy="10.9" r="3.900" fill="#7f9db5"/><path d="M12.4 10.9H17.6" stroke="#fff" stroke-width="1.700"/></svg>
<span class="t" style="left:114.20px;top:415px;font-size:15px;color:#4a4a4a;letter-spacing:0.453px;">MergeExplanation.txt</span>
<span class="t" style="left:506.35px;top:415px;font-size:15px;color:#7b7b7b;letter-spacing:0.447px;">Private / Ignored</span>
<span class="t" style="left:711.30px;top:415px;font-size:15px;color:#7b7b7b;letter-spacing:0.663px;">374 bytes</span>
<span class="t" style="left:794.80px;top:415px;font-size:15px;color:#7b7b7b;letter-spacing:0.374px;">03/18/21 11:23:36 AM</span>
<svg style="left:88px;top:449px" width="22" height="20" viewBox="0 0 22 20"><rect x="0.500" y="3.500" width="17" height="13" fill="#fcfcfc" stroke="#808080" stroke-width="1"/><path d="M0.500 4.200H17.500" stroke="#777" stroke-width="1.400"/><circle cx="7.500" cy="9.900" r="3" fill="none" stroke="#8a8a8a" stroke-width="1" stroke-dasharray="1.300 0.800"/><circle cx="7.500" cy="9.900" r="0.900" fill="none" stroke="#aaa" stroke-width="0.600"/><circle cx="11.300" cy="13" r="1.800" fill="#8fc4ea"/><circle cx="15" cy="10.8" r="4.300" fill="#fff"/><circle cx="15" cy="10.8" r="3.900" fill="#7f9db5"/><path d="M12.4 10.8H17.6" stroke="#fff" stroke-width="1.700"/></svg>
<span class="t" style="left:114.70px;top:449px;font-size:15px;color:#4a4a4a;letter-spacing:0.478px;">samplemergetool.bat</span>
<span class="t" style="left:506.35px;top:449px;font-size:15px;color:#7b7b7b;letter-spacing:0.447px;">Private / Ignored</span>
<span class="t" style="left:711.30px;top:449px;font-size:15px;color:#7b7b7b;letter-spacing:0.663px;">395 bytes</span>
<span class="t" style="left:794.80px;top:449px;font-size:15px;color:#7b7b7b;letter-spacing:0.374px;">03/18/21 11:23:36 AM</span>
<svg style="left:88px;top:483px" width="22" height="20" viewBox="0 0 22 20"><rect x="0.500" y="3.500" width="17" height="13" fill="#fcfcfc" stroke="#808080" stroke-width="1"/><path d="M0.500 4.200H17.500" stroke="#777" stroke-width="1.400"/><circle cx="7.500" cy="9.900" r="3" fill="none" stroke="#8a8a8a" stroke-width="1" stroke-dasharray="1.300 0.800"/><circle cx="7.500" cy="9.900" r="0.900" fill="none" stroke="#aaa" stroke-width="0.600"/><circle cx="11.300" cy="13" r="1.800" fill="#8fc4ea"/><circle cx="15" cy="10.8" r="4.300" fill="#fff"/><circle cx="15" cy="10.8" r="3.900" fill="#7f9db5"/><path d="M12.4 10.8H17.6" stroke="#fff" stroke-width="1.700"/></svg>
<span class="t" style="left:114.70px;top:483px;font-size:15px;color:#4a4a4a;letter-spacing:0.492px;">samplesemanticmergetool.bat</span>
<span class="t" style="left:506.35px;top:483px;font-size:15px;color:#7b7b7b;letter-spacing:0.447px;">Private / Ignored</span>
<span class="t" style="left:711.30px;top:483px;font-size:15px;color:#7b7b7b;letter-spacing:0.663px;">471 bytes</span>
<span class="t" style="left:794.80px;top:483px;font-size:15px;color:#7b7b7b;letter-spacing:0.374px;">03/18/21 11:23:36 AM</span>
<svg style="left:29px;top:517px" width="20" height="20" viewBox="0 0 20 20"><path d="M5.300 3.700L11.900 10.300L5.300 16.900" fill="none" stroke="#444" stroke-width="1.300"/></svg>
<svg style="left:61px;top:517px" width="24" height="22" viewBox="0 0 24 22"><path d="M1 2.200Q1 1 2.200 1H8L10.600 5H18.500Q19.700 5 19.700 6.200V17.700Q19.700 18.900 18.500 18.900H2.200Q1 18.900 1 17.700Z" fill="#8ea4bc"/><circle cx="15.900" cy="15" r="5" fill="#67d3bd"/><path d="M12.600 15L14.700 16.600L18.200 12.600" fill="none" stroke="#fff" stroke-width="1.700"/></svg>
<span class="t" style="left:89.60px;top:517px;font-size:15px;color:#4a4a4a;letter-spacing:0.447px;">06. Method_overload</span>
<span class="t" style="left:506.50px;top:517px;font-size:15px;color:#7b7b7b;letter-spacing:0.478px;">Controlled</span>
<span class="t" style="left:794.80px;top:517px;font-size:15px;color:#7b7b7b;letter-spacing:0.463px;">06/10/21 02:34:08 PM</span>
<div class="a" style="left:988px;top:517px;width:111px;height:20px;overflow:hidden;">
<span class="t" style="left:6.00px;top:0px;font-size:15px;color:#7b7b7b;letter-spacing:0.518px;">dpenalba@codicesoftware.com</span>
</div>
<svg style="left:29px;top:551px" width="20" height="20" viewBox="0 0 20 20"><path d="M5.300 3.700L11.900 10.300L5.300 16.900" fill="none" stroke="#444" stroke-width="1.300"/></svg>
<svg style="left:61px;top:551px" width="24" height="22" viewBox="0 0 24 22"><path d="M1 2.200Q1 1 2.200 1H8L10.600 5H18.500Q19.700 5 19.700 6.200V17.700Q19.700 18.900 18.500 18.900H2.200Q1 18.900 1 17.700Z" fill="#8ea4bc"/><circle cx="15.900" cy="15" r="5" fill="#67d3bd"/><path d="M12.600 15L14.700 16.600L18.200 12.600" fill="none" stroke="#fff" stroke-width="1.700"/></svg>
<span class="t" style="left:89.60px;top:551px;font-size:15px;color:#4a4a4a;letter-spacing:0.217px;">Java</span>
<span class="t" style="left:506.50px;top:551px;font-size:15px;color:#7b7b7b;letter-spacing:0.478px;">Controlled</span>
<span class="t" style="left:794.80px;top:551px;font-size:15px;color:#7b7b7b;letter-spacing:0.463px;">06/10/21 02:34:08 PM</span>
<div class="a" style="left:988px;top:551px;width:111px;height:20px;overflow:hidden;">
<span class="t" style="left:6.00px;top:0px;font-size:15px;color:#7b7b7b;letter-spacing:0.518px;">dpenalba@codicesoftware.com</span>
</div>
</div>
</div>
<div class="a" style="left:0;top:0;width:1355px;height:815px;box-sizing:border-box;border:1px solid #6b6b6b;border-left-color:#555;pointer-events:none;"></div>
</body></html>
